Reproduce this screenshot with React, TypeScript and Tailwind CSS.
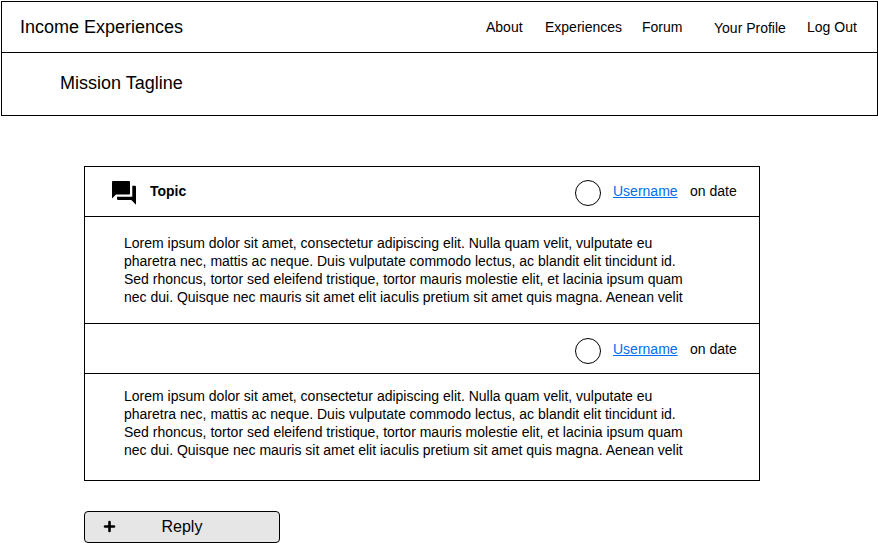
const lines = [
  'Lorem ipsum dolor sit amet, consectetur adipiscing elit. Nulla quam velit, vulputate eu',
  'pharetra nec, mattis ac neque. Duis vulputate commodo lectus, ac blandit elit tincidunt id.',
  'Sed rhoncus, tortor sed eleifend tristique, tortor mauris molestie elit, et lacinia ipsum quam',
  'nec dui. Quisque nec mauris sit amet elit iaculis pretium sit amet quis magna. Aenean velit',
];

function Body() {
  return (
    <div>
      {lines.map((line) => (
        <p key={line} className="whitespace-nowrap">{line}</p>
      ))}
    </div>
  );
}

function Author() {
  return (
    <div className="ml-auto flex items-start">
      <svg className="mt-3 h-[28px] w-[28px]" viewBox="0 0 28 28">
        <circle cx="14" cy="14" r="12.5" fill="#fff" stroke="#000" />
      </svg>
      <a href="#" className="mt-[15px] ml-[11px] w-[77px] text-[#006eee] underline">Username</a>
      <span className="mt-[15px] w-[69px] whitespace-nowrap">on date</span>
    </div>
  );
}

export default function App() {
  return (
    <div className="h-[543px] w-[878px] overflow-hidden bg-white pt-px pl-px font-['Liberation_Sans',Arial,sans-serif] text-[14px] leading-[18px] text-black">
      <header className="h-[115px] w-[877px] border border-black">
        <nav className="flex h-[51px] items-start border-b border-black pt-4 pl-[18px]">
          <h1 className="-mt-px w-[466px] text-[18px] leading-[20px]">Income Experiences</h1>
          <a className="w-[59px]">About</a>
          <a className="w-[97px]">Experiences</a>
          <a className="w-[72px]">Forum</a>
          <a className="w-[93px] pt-px">Your Profile</a>
          <a className="whitespace-nowrap">Log Out</a>
        </nav>
        <p className="pt-5 pl-[58px] text-[18px] leading-[20px]">Mission Tagline</p>
      </header>
      <main className="mt-[50px] ml-[83px]">
        <section className="w-[676px] border border-black">
          <div className="flex h-[50px] items-start border-b border-black pl-[25px]">
            <svg className="mt-3 h-[28px] w-[28px]" viewBox="0 0 28 28">
              <path d="M2 3Q2 2 3 2H19Q20 2 20 3V14.7Q20 15.5 19 15.5H6L2 19.5Z" />
              <path d="M22.3 6.7H25Q26 6.7 26 7.7V25.7L21.3 21H8Q7 21 7 20V17.7H22.3Z" />
            </svg>
            <h2 className="mt-[15px] ml-3 font-bold">Topic</h2>
            <Author />
          </div>
          <div className="h-[107px] border-b border-black pt-[17px] pl-[39px]"><Body /></div>
          <div className="flex h-[50px] items-start border-b border-black pt-px"><Author /></div>
          <div className="h-[106px] pt-[13px] pl-[39px]"><Body /></div>
        </section>
        <button className="mt-[30px] flex h-[32px] w-[196px] items-center rounded-[4px] border border-black bg-[#e6e6e6] pl-[18px] text-[16px]">
          <svg className="-mt-px h-[13px] w-[13px]" viewBox="0 0 13 13">
            <path d="M6.5 2v9M2 6.5h9" stroke="#000" strokeWidth="2.6" strokeLinecap="round" />
          </svg>
          <span className="ml-[45.5px]">Reply</span>
        </button>
      </main>
    </div>
  );
}
